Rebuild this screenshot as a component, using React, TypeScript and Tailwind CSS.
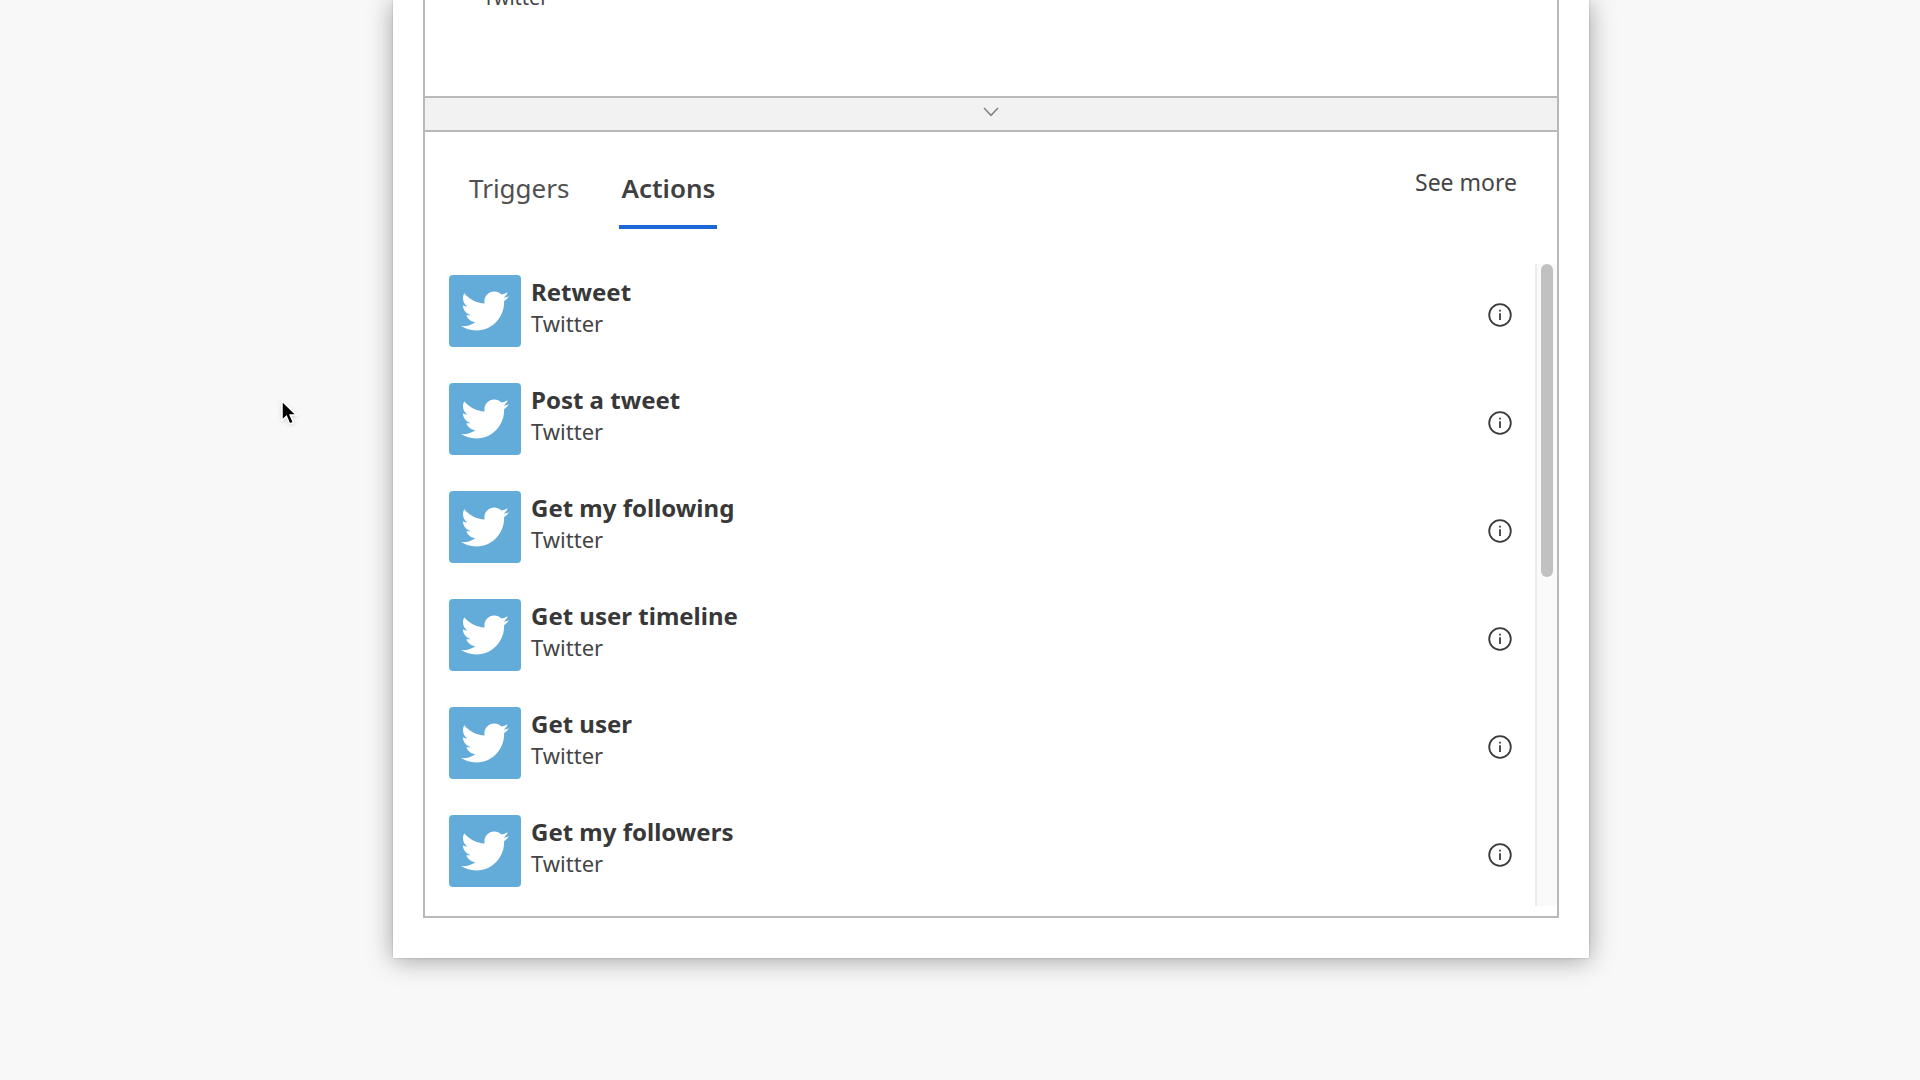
import { FaTwitter } from "react-icons/fa";

const actions = [
  "Retweet",
  "Post a tweet",
  "Get my following",
  "Get user timeline",
  "Get user",
  "Get my followers",
];

function InfoIcon() {
  return (
    <svg viewBox="0 0 24 24" className="size-6" fill="none" stroke="#3b3b3b" aria-hidden="true">
      <circle cx="12" cy="12" r="10.8" strokeWidth="1.8" />
      <path d="M12 10.2V17" strokeWidth="1.8" />
      <path d="M12 6.8V8.6" strokeWidth="1.8" />
    </svg>
  );
}

function ActionRow({ name }: { name: string }) {
  return (
    <li className="flex items-center">
      <button type="button" className="flex grow items-center gap-2.5 text-left">
        <span className="flex size-[72px] shrink-0 items-center justify-center rounded-[4px] bg-[#63abd8]">
          <FaTwitter className="size-12 text-white" aria-hidden="true" />
        </span>
        <span className="flex flex-col pb-2">
          <span className="text-[24px] leading-8 font-bold text-[#383838]">{name}</span>
          <span className="text-[22px] leading-[31px] text-[#454545]">Twitter</span>
        </span>
      </button>
      <button type="button" aria-label={`About ${name}`} className="mt-2 shrink-0">
        <InfoIcon />
      </button>
    </li>
  );
}

function Pointer() {
  return (
    <svg viewBox="0 0 20 28" className="absolute top-[399px] left-[280px] h-7 w-5 drop-shadow" aria-hidden="true">
      <path
        d="M2 2V21.5L6.4 17.4L9.6 25L13.4 23.4L10.2 16H16.4Z"
        fill="#000"
        stroke="#fff"
        strokeWidth="1.5"
      />
    </svg>
  );
}

export default function App() {
  return (
    <div className="relative min-h-screen bg-[#f8f8f8] pr-[331px] pl-[393px] font-['Noto_Sans',sans-serif]">
      <main className="bg-white px-[30px] pb-10 shadow-[0_0_2px_rgba(0,0,0,0.2),0_2px_24px_rgba(0,0,0,0.36)]">
        <div className="border-2 border-t-0 border-[#b9b9b9]">
          <section className="flex overflow-hidden pb-[86px] pl-[58px]">
            <p className="-mt-3.5 text-[20px] leading-6 text-[#454545]">Twitter</p>
          </section>
          <button
            type="button"
            aria-label="Collapse connectors"
            className="flex h-9 w-full items-center justify-center border-y-2 border-[#b9b9b9] bg-[#f2f2f2] pb-1"
          >
            <svg viewBox="0 0 16 10" className="h-2.5 w-4" fill="none" stroke="#858585" strokeWidth="1.6" aria-hidden="true">
              <path d="M1 1L8 8.4L15 1" />
            </svg>
          </button>

          <div className="flex items-start justify-between pt-9 pr-10 pl-11">
            <div role="tablist" className="flex gap-[50px]">
              <button
                type="button"
                role="tab"
                aria-selected="false"
                className="border-b-4 border-transparent pb-[17px] text-[26px] leading-10 text-[#505050]"
              >
                Triggers
              </button>
              <button
                type="button"
                role="tab"
                aria-selected="true"
                className="border-b-4 border-[#1b66d9] px-0.5 pb-[17px] text-[26px] leading-10 font-semibold text-[#404040]"
              >
                Actions
              </button>
            </div>
            <a href="#more" className="-mt-0.5 text-[23px] leading-8 text-[#454545]">
              See more
            </a>
          </div>

          <div className="mt-[35px] mb-[10px] flex h-[642px]">
            <ul className="flex grow flex-col gap-9 pt-[11px] pr-[23px] pl-6">
              {actions.map((name) => (
                <ActionRow key={name} name={name} />
              ))}
            </ul>
            <div className="flex w-[22px] shrink-0 items-start justify-center border-l-2 border-[#ececec] bg-[#fafafa]">
              <div className="h-[313px] w-3 rounded-full bg-[#c1c1c1]" />
            </div>
          </div>
        </div>
      </main>
      <Pointer />
    </div>
  );
}
